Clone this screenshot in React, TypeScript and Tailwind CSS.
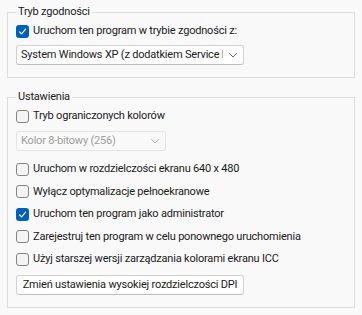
import React from "react";

const Box = ({ checked }: { checked?: boolean }) =>
  checked ? (
    <span className="flex h-[13px] w-[13px] shrink-0 items-center justify-center rounded-[3px] bg-[#005fb8]">
      <svg width="9" height="9" viewBox="0 0 9 9" fill="none">
        <path d="M1.5 4.8 L3.6 6.8 L7.6 2.2" stroke="#fff" strokeWidth="1.1" strokeLinecap="round" strokeLinejoin="round" />
      </svg>
    </span>
  ) : (
    <span className="h-[13px] w-[13px] shrink-0 rounded-[3px] border border-[#858585] bg-[#f4f4f4]" />
  );

const Check = ({ label, checked }: { label: string; checked?: boolean }) => (
  <label className="flex h-4 items-center gap-1">
    <Box checked={checked} />
    <span className="whitespace-nowrap">{label}</span>
  </label>
);

const Chevron = ({ color }: { color: string }) => (
  <svg width="10" height="6" viewBox="0 0 10 6" fill="none">
    <path d="M1 1 L5 5 L9 1" stroke={color} strokeWidth="1" />
  </svg>
);

export default function App() {
  return (
    <div className="flex min-h-[315px] flex-col gap-[11px] bg-[#f9f9f9] pl-[7px] pr-[7px] pt-1 font-['Roboto','Liberation_Sans',sans-serif] text-[11px] leading-4 tracking-[-0.2px] text-[#1a1a1a]">
      <fieldset className="border border-[#dcdcdc] px-2 pb-3">
        <legend className="px-0.5">Tryb zgodności</legend>
        <div className="flex flex-col gap-[6px] pt-[3px]">
          <Check label="Uruchom ten program w trybie zgodności z:" checked />
          <div className="flex h-5 w-[228px] items-center overflow-hidden rounded-[3px] border border-[#d0d0d0] border-b-[#bdbdbd] bg-white">
            <span className="flex-1 overflow-hidden whitespace-nowrap pl-1">
              System Windows XP (z dodatkiem Service Pack 3)
            </span>
            <span className="flex h-full w-5 items-center justify-center">
              <Chevron color="#6e6e6e" />
            </span>
          </div>
        </div>
      </fieldset>

      <fieldset className="border border-[#dcdcdc] px-2 pb-3">
        <legend className="px-0.5">Ustawienia</legend>
        <div className="flex flex-col pt-[3px]">
          <Check label="Tryb ograniczonych kolorów" />
          <div className="mt-[7px] flex h-5 w-[150px] items-center rounded-[3px] border border-[#e3e3e3] bg-[#f9f9f9] text-[#9d9d9d]">
            <span className="flex-1 whitespace-nowrap pl-1">Kolor 8-bitowy (256)</span>
            <span className="flex h-full w-5 items-center justify-center">
              <Chevron color="#b5b5b5" />
            </span>
          </div>
          <div className="mt-[10px] flex flex-col gap-[6.5px]">
            <Check label="Uruchom w rozdzielczości ekranu 640 x 480" />
            <Check label="Wyłącz optymalizacje pełnoekranowe" />
            <Check label="Uruchom ten program jako administrator" checked />
            <Check label="Zarejestruj ten program w celu ponownego uruchomienia" />
            <Check label="Użyj starszej wersji zarządzania kolorami ekranu ICC" />
          </div>
          <button className="mt-[8px] flex h-5 w-[228px] items-center justify-center whitespace-nowrap rounded-[3px] border border-[#d0d0d0] border-b-[#bdbdbd] bg-white">
            Zmień ustawienia wysokiej rozdzielczości DPI
          </button>
        </div>
      </fieldset>
    </div>
  );
}
